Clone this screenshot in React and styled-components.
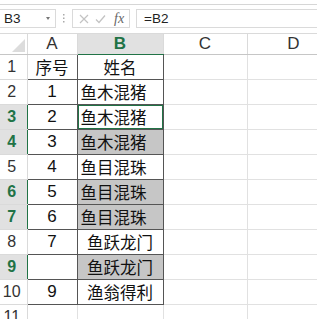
import React from "react";
import styled, { createGlobalStyle } from "styled-components";

const GlobalStyle = createGlobalStyle`
  html, body {
    margin: 0;
    padding: 0;
    background: #fff;
    overflow: hidden;
  }
  body {
    font-family: "Liberation Sans", "Noto Sans CJK SC", sans-serif;
  }
`;

const Page = styled.div`
  width: 317px;
  height: 319px;
  overflow: hidden;
  background: #fff;
`;

const RibbonEdge = styled.div`
  height: 4px;
  border-bottom: 1px solid #d6d6d6;
`;

const FormulaBar = styled.div`
  display: flex;
  align-items: stretch;
  height: 19px;
  margin: 4px 0 5px;
`;

const NameBox = styled.div`
  width: 57px;
  margin-left: -1px;
  box-sizing: border-box;
  border: 1px solid #dadada;
  display: flex;
  align-items: center;
  justify-content: space-between;
  padding: 0 5px 0 4px;
  font-size: 13.5px;
  color: #222;
`;

const Caret = styled.span`
  width: 0;
  height: 0;
  border-left: 2.5px solid transparent;
  border-right: 2.5px solid transparent;
  border-top: 3px solid #777;
`;

const Grip = styled.div`
  width: 16px;
  display: flex;
  align-items: center;
  justify-content: center;
`;

const FxBox = styled.div`
  width: 58px;
  box-sizing: border-box;
  border: 1px solid #dadada;
  display: flex;
  align-items: center;
  gap: 6px;
  padding-left: 6px;
`;

const FxLabel = styled.span`
  font-family: "Liberation Serif", serif;
  font-style: italic;
  font-size: 14px;
  color: #666;
  margin-left: 2px;
`;

const FormulaInput = styled.div`
  flex: 1;
  margin-left: 6px;
  box-sizing: border-box;
  border: 1px solid #dadada;
  border-right: none;
  display: flex;
  align-items: center;
  padding-left: 7px;
  font-size: 13.5px;
  color: #222;
`;

const Sheet = styled.table`
  border-collapse: collapse;
  table-layout: fixed;
  width: 340px;
`;

const HeadCell = styled.th`
  height: 20px;
  padding: 0;
  font-weight: ${(p) => (p.$active ? 700 : 400)};
  font-size: 17px;
  color: ${(p) => (p.$active ? "#217346" : "#333")};
  background: ${(p) => (p.$active ? "#e1e1e1" : "#fff")};
  border: 1px solid #dadada;
  border-bottom: 1px solid ${(p) => (p.$active ? "#217346" : "#c6c6c6")};
  text-align: center;
  vertical-align: middle;
`;

const Corner = styled.th`
  padding: 0;
  border: 1px solid #dadada;
  border-left: none;
  border-bottom: 1px solid #c6c6c6;
  position: relative;
  background: #fff;
  &::after {
    content: "";
    position: absolute;
    right: 2px;
    bottom: 2px;
    width: 0;
    height: 0;
    border-left: 13px solid transparent;
    border-bottom: 13px solid #dcdcdc;
  }
`;

const RowHead = styled.th`
  height: 24px;
  padding: 0 3px 0 0;
  text-align: center;
  font-size: 16px;
  font-weight: ${(p) => (p.$active ? 700 : 400)};
  color: ${(p) => (p.$active ? "#217346" : "#333")};
  background: ${(p) => (p.$active ? "#e1e1e1" : "#fff")};
  border: 1px solid #dadada;
  border-left: none;
  border-right: 1px solid ${(p) => (p.$active ? "#217346" : "#dadada")};
  vertical-align: middle;
`;

const Cell = styled.td`
  height: 24px;
  padding: 0 3px;
  font-family: "Liberation Sans", "Noto Sans CJK SC", sans-serif;
  font-size: ${(p) => (p.$cjk ? "16.5px" : "17px")};
  color: #111;
  white-space: nowrap;
  overflow: hidden;
  text-align: ${(p) => p.$align || "left"};
  background: ${(p) => (p.$selected ? "#c6c6c6" : "#fff")};
  border: 1px solid ${(p) => (p.$data ? "#555" : "#e1e1e1")};
  box-shadow: ${(p) => (p.$current ? "inset 0 0 0 1px #217346" : "none")};
  vertical-align: middle;
`;

const columns = ["A", "B", "C", "D"];

const rows = [
  { n: 1, a: "序号", b: "姓名", bAlign: "center" },
  { n: 2, a: "1", b: "鱼木混猪" },
  { n: 3, a: "2", b: "鱼木混猪", current: true },
  { n: 4, a: "3", b: "鱼木混猪", selected: true },
  { n: 5, a: "4", b: "鱼目混珠" },
  { n: 6, a: "5", b: "鱼目混珠", selected: true },
  { n: 7, a: "6", b: "鱼目混珠", selected: true },
  { n: 8, a: "7", b: "鱼跃龙门", bAlign: "center" },
  { n: 9, a: "", b: "鱼跃龙门", bAlign: "center", selected: true },
  { n: 10, a: "9", b: "渔翁得利", bAlign: "center" },
  { n: 11 },
];

function CrossIcon() {
  return (
    <svg width="10" height="10" viewBox="0 0 10 10">
      <path d="M1 1 L9 9 M9 1 L1 9" stroke="#c3c3c3" strokeWidth="1.2" fill="none" />
    </svg>
  );
}

function CheckIcon() {
  return (
    <svg width="11" height="10" viewBox="0 0 11 10">
      <path d="M1 5.5 L4 8.5 L10 1.5" stroke="#c3c3c3" strokeWidth="1.3" fill="none" />
    </svg>
  );
}

function GripDots() {
  return (
    <svg width="2" height="9" viewBox="0 0 2 9">
      <rect x="0" y="0" width="1.5" height="1.5" fill="#aaa" />
      <rect x="0" y="3.5" width="1.5" height="1.5" fill="#aaa" />
      <rect x="0" y="7" width="1.5" height="1.5" fill="#aaa" />
    </svg>
  );
}

export default function App() {
  return (
    <Page>
      <GlobalStyle />
      <RibbonEdge />
      <FormulaBar>
        <NameBox>
          B3
          <Caret />
        </NameBox>
        <Grip>
          <GripDots />
        </Grip>
        <FxBox>
          <CrossIcon />
          <CheckIcon />
          <FxLabel>fx</FxLabel>
        </FxBox>
        <FormulaInput>=B2</FormulaInput>
      </FormulaBar>

      <Sheet>
        <colgroup>
          <col style={{ width: 27 }} />
          <col style={{ width: 50 }} />
          <col style={{ width: 86 }} />
          <col style={{ width: 84 }} />
          <col style={{ width: 93 }} />
        </colgroup>
        <thead>
          <tr>
            <Corner />
            {columns.map((c) => (
              <HeadCell key={c} $active={c === "B"}>
                {c}
              </HeadCell>
            ))}
          </tr>
        </thead>
        <tbody>
          {rows.map((r) => {
            const inData = r.n <= 10;
            const active = r.current || r.selected;
            return (
              <tr key={r.n}>
                <RowHead $active={active}>{r.n}</RowHead>
                <Cell $data={inData} $align="center" $cjk={r.n === 1}>
                  {r.a}
                </Cell>
                <Cell
                  $data={inData}
                  $cjk
                  $align={r.bAlign}
                  $selected={r.selected}
                  $current={r.current}
                >
                  {r.b}
                </Cell>
                <Cell />
                <Cell />
              </tr>
            );
          })}
        </tbody>
      </Sheet>
    </Page>
  );
}
